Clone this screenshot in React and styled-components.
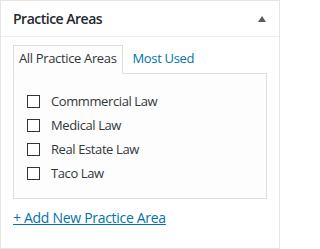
import React from "react";
import styled, { createGlobalStyle } from "styled-components";

const practiceAreas = ["Commmercial Law", "Medical Law", "Real Estate Law", "Taco Law"];

const GlobalStyle = createGlobalStyle`
  html, body {
    margin: 0;
    padding: 0;
    background: #fff;
  }
  body {
    font-family: "Open Sans", "Noto Sans", "Liberation Sans", sans-serif;
    font-size: 13px;
    letter-spacing: -0.4px;
    color: #32373c;
  }
`;

const Postbox = styled.div`
  box-sizing: border-box;
  width: 280px;
  height: 249px;
  border: 1px solid #e5e5e5;
  background: #fff;
`;

const Header = styled.div`
  display: flex;
  align-items: center;
  justify-content: space-between;
  padding: 8px 13px 8px 12px;
  border-bottom: 1px solid #eee;
`;

const Title = styled.h2`
  margin: 0;
  font-size: 14px;
  font-weight: 600;
  letter-spacing: -0.5px;
  line-height: 19px;
  color: #23282d;
`;

const Toggle = styled.button`
  display: flex;
  padding: 0;
  border: 0;
  background: none;
  color: #555d66;
`;

const Inside = styled.div`
  padding: 8px 12px 0 12px;
`;

const Tabs = styled.ul`
  display: flex;
  gap: 4px;
  margin: 0;
  padding: 0;
  list-style: none;
`;

const Tab = styled.li`
  position: relative;
  z-index: 1;
  padding: 3px 5px 5px;
  line-height: 19px;
  letter-spacing: -0.35px;
  border: 1px solid ${p => (p.$active ? "#ddd" : "transparent")};
  border-bottom-color: ${p => (p.$active ? "#fdfdfd" : "transparent")};
  background: ${p => (p.$active ? "#fdfdfd" : "transparent")};
  color: ${p => (p.$active ? "#32373c" : "#0073aa")};
  cursor: pointer;
`;

const Panel = styled.div`
  margin-top: -1px;
  padding: 0 13px;
  border: 1px solid #ddd;
  background: #fdfdfd;
`;

const Checklist = styled.ul`
  margin: 0;
  padding: 15px 0 13px;
  list-style: none;
`;

const Item = styled.li`
  display: flex;
  align-items: center;
  height: 24px;
`;

const Check = styled.input.attrs({ type: "checkbox" })`
  appearance: none;
  box-sizing: border-box;
  width: 13px;
  height: 13px;
  margin: 0 11px 0 0;
  border: 1px solid #333;
  background: #fff;
`;

const Label = styled.label`
  line-height: 19px;
  color: #32373c;
`;

const AddLink = styled.a`
  display: inline-block;
  margin-top: 9px;
  font-size: 14px;
  letter-spacing: -0.3px;
  line-height: 19px;
  color: #0073aa;
  text-decoration: underline;
`;

export default function App() {
  return (
    <>
      <GlobalStyle />
      <Postbox>
        <Header>
          <Title>Practice Areas</Title>
          <Toggle aria-label="Toggle panel">
            <svg width="8" height="6" viewBox="0 0 8 6">
              <path d="M4 0 L8 6 L0 6 Z" fill="currentColor" />
            </svg>
          </Toggle>
        </Header>
        <Inside>
          <Tabs>
            <Tab $active>All Practice Areas</Tab>
            <Tab>Most Used</Tab>
          </Tabs>
          <Panel>
            <Checklist>
              {practiceAreas.map(area => (
                <Item key={area}>
                  <Check id={area} />
                  <Label htmlFor={area}>{area}</Label>
                </Item>
              ))}
            </Checklist>
          </Panel>
          <AddLink href="#">+ Add New Practice Area</AddLink>
        </Inside>
      </Postbox>
    </>
  );
}
